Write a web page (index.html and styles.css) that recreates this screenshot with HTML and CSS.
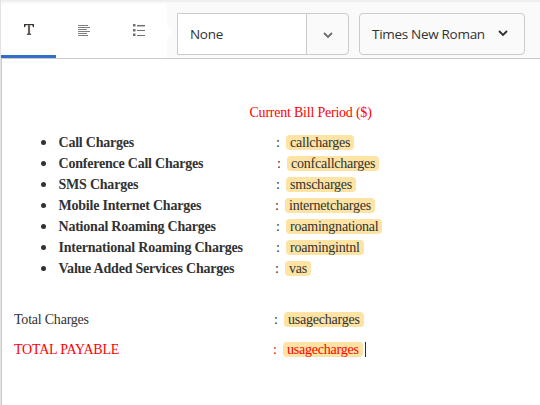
FILE: index.html
```html
<!DOCTYPE html>
<html lang="en">
<head>
<meta charset="utf-8">
<title>Bill editor</title>
<link rel="stylesheet" href="styles.css">
</head>
<body>
<div class="editor">
  <header class="toolbar">
    <nav class="tabs">
      <div class="tab active"><svg width="10" height="11" viewBox="0 0 10 11"><path d="M0 0h10v3H9L8.300 1H5.700v8.500l1.300.5v.7H3V10l1.300-.5V1H1.700L1 3H0z" fill="#3e3634" stroke="#3e3634" stroke-width=".3"/></svg></div>
      <div class="tab"><svg width="12" height="11" viewBox="0 0 12 11"><path d="M0 .5h10M0 2.500h12M0 4.500h9M0 6.500h12M0 8.500h9M0 10.500h10" stroke="#707070" stroke-width=".9"/></svg></div>
      <div class="tab"><svg width="12" height="12" viewBox="0 0 12 12"><path d="M0 0h2.500v2.500H0zM0 5h2.500v2.500H0zM0 9.500h2.500V12H0z" fill="#707070"/><path d="M4 1.700h8" stroke="#707070" stroke-width="1.500"/><path d="M4 6.500h8M4 11.500h8" stroke="#707070"/></svg></div>
    </nav>
    <div class="combo">
      <div class="value">None</div>
      <div class="arrow"><svg width="10" height="7" viewBox="0 0 10 7"><path d="M1 1l4 4 4-4" fill="none" stroke="#6c6c6c" stroke-width="1.800"/></svg></div>
    </div>
    <div class="select"><span>Times New Roman</span><svg width="10" height="7" viewBox="0 0 10 7"><path d="M1 1l4 4 4-4" fill="none" stroke="#303030" stroke-width="1.800"/></svg></div>
  </header>
  <main class="page">
    <p class="heading">Current Bill Period ($)</p>
    <ul class="charges">
      <li><b>Call Charges</b><i>:</i><mark>callcharges</mark></li>
      <li class="wide"><b>Conference Call Charges</b><i>:</i><mark>confcallcharges</mark></li>
      <li><b>SMS Charges</b><i>:</i><mark>smscharges</mark></li>
      <li class="narrow"><b>Mobile Internet Charges</b><i>:</i><mark>internetcharges</mark></li>
      <li><b>National Roaming Charges</b><i>:</i><mark>roamingnational</mark></li>
      <li><b>International Roaming Charges</b><i>:</i><mark>roamingintnl</mark></li>
      <li class="narrow"><b>Value Added Services Charges</b><i>:</i><mark>vas</mark></li>
    </ul>
    <div class="total"><span>Total Charges</span><i>:</i><mark>usagecharges</mark></div>
    <div class="total payable"><span>TOTAL PAYABLE</span><i>:</i><mark>usagecharges</mark><span class="caret"></span></div>
  </main>
</div>
</body>
</html>
```
FILE: styles.css
```css
* { box-sizing: border-box; }
body { margin: 0; background: #fff; overflow: hidden; }
.editor { height: 405px; border-left: 1px solid #e2e2e2; }
svg { display: block; }
.toolbar {
  height: 59px;
  display: flex;
  align-items: flex-start;
  background: #fafafa;
  border-top: 2px solid #efefef;
  border-bottom: 1px solid #cbcbcb;
  font: 13.5px "Open Sans", "Noto Sans", sans-serif;
  letter-spacing: -.3px;
  color: #323232;
}
.tabs {
  position: relative;
  display: flex;
  width: 166px;
  height: 54px;
  margin-top: 2px;
  background: #fff;
  border-radius: 3px;
}
.tabs::after {
  content: "";
  position: absolute;
  left: 166px;
  top: 22px;
  border: 6px solid transparent;
  border-left-color: #fff;
  border-right: 0;
}
.tab {
  width: 55px;
  padding: 5px 0 4px 1px;
  display: flex;
  align-items: center;
  justify-content: center;
  border-bottom: 3px solid transparent;
}
.tab.active { padding-bottom: 5px; border-bottom-color: #326ec8; }
.combo {
  display: flex;
  width: 172px;
  height: 42px;
  margin: 11px 0 0 10px;
  border: 1px solid #cbcbcb;
  border-radius: 0 4px 4px 0;
}
.value { width: 128px; padding-left: 12px; line-height: 41px; background: #fff; }
.arrow {
  flex: 1;
  display: flex;
  align-items: center;
  justify-content: center;
  padding-top: 3px;
  border-left: 1px solid #cbcbcb;
}
.select {
  display: flex;
  align-items: center;
  justify-content: space-between;
  width: 166px;
  height: 42px;
  margin: 11px 0 0 10px;
  padding: 0 16px 0 12px;
  border: 1px solid #cbcbcb;
  border-radius: 4px;
}
.select svg { margin-bottom: 1px; }
.page {
  height: 346px;
  border-left: 1px solid #cbcbcb;
  padding: 43px 0 0 12px;
  font: 14px/21px "Liberation Serif", "Times New Roman", serif;
  letter-spacing: -.22px;
  color: #323232;
}
.heading { margin: 0 0 9px 235.5px; color: #f00; }
.charges { margin: 0 0 30px; padding: 0 0 0 27px; list-style: none; }
.charges li { display: flex; align-items: center; height: 21px; }
.charges li::before {
  content: "";
  width: 5px;
  height: 5px;
  margin-right: 12.500px;
  border-radius: 50%;
  background: #323232;
}
.charges b { width: 217.500px; }
.charges .wide b { width: 218.500px; }
.charges .narrow b { width: 216.500px; }
i { width: 10px; font-style: normal; }
mark {
  height: 15px;
  padding: 0 4px;
  line-height: 15px;
  border-radius: 4px;
  background: #fde3a4;
  color: inherit;
}
.total { display: flex; align-items: center; height: 21px; margin-bottom: 9px; }
.total > span:first-child { width: 260px; }
.payable { color: #f00; }
.payable > span:first-child { width: 259px; }
.caret { width: 1px; height: 15px; margin-left: 2px; background: #303030; }
```
